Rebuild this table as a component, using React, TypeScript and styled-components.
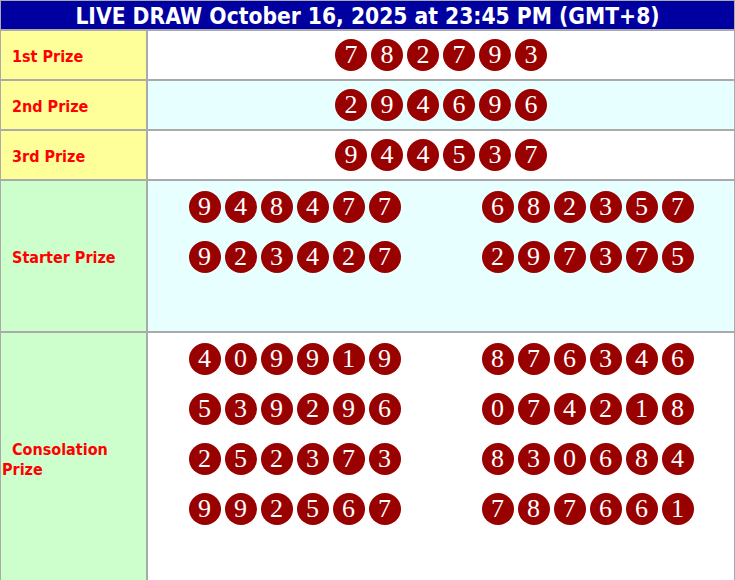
import React from 'react';
import styled, { createGlobalStyle } from 'styled-components';

const GlobalStyle = createGlobalStyle`
  body {
    margin: 0;
    background: #ffffff;
    font-family: "DejaVu Sans", Verdana, sans-serif;
  }
`;

const COLORS = {
  border: '#aaaaaa',
  header: '#0000a0',
  yellow: '#ffff99',
  green: '#ccffcc',
  cyan: '#e8ffff',
  white: '#ffffff',
  label: '#ff0000',
  ball: '#990000',
};

const Board = styled.div`
  width: 735px;
  box-sizing: border-box;
  display: grid;
  grid-template-columns: 145px 1fr;
  gap: 2px;
  padding: 1px 1px 0 1px;
  background: ${COLORS.border};
`;

const Header = styled.div`
  grid-column: 1 / span 2;
  height: 28px;
  box-sizing: border-box;
  padding-top: 2px;
  display: flex;
  align-items: center;
  justify-content: center;
  background: ${COLORS.header};
  color: #ffffff;
  font-family: "DejaVu Sans Condensed", "DejaVu Sans", sans-serif;
  font-stretch: semi-condensed;
  font-weight: bold;
  font-size: 22.6px;
  white-space: nowrap;
`;

const Label = styled.div<{ $bg: string; $h: number }>`
  min-height: ${(p) => p.$h}px;
  box-sizing: border-box;
  display: flex;
  align-items: center;
  padding: 3px 1px 0 1px;
  background: ${(p) => p.$bg};
  color: ${COLORS.label};
  font-family: "DejaVu Sans Condensed", "DejaVu Sans", sans-serif;
  font-stretch: semi-condensed;
  font-weight: bold;
  font-size: 16px;
  line-height: 20px;
`;

const Single = styled.div<{ $bg: string }>`
  display: flex;
  align-items: center;
  justify-content: center;
  background: ${(p) => p.$bg};
`;

const Split = styled.div<{ $bg: string }>`
  display: grid;
  grid-template-columns: 1fr 1fr;
  align-content: start;
  padding-top: 10px;
  row-gap: 18px;
  background: ${(p) => p.$bg};
`;

const Group = styled.div`
  display: flex;
  justify-content: center;
  gap: 4px;
`;

const Ball = styled.span`
  width: 32px;
  height: 32px;
  border-radius: 50%;
  background: ${COLORS.ball};
  color: #ffffff;
  display: inline-flex;
  align-items: center;
  justify-content: center;
  font-family: "Liberation Serif", "Times New Roman", serif;
  font-size: 26px;
  line-height: 1;
`;

const Number = ({ value }: { value: string }) => (
  <Group>
    {value.split('').map((d, i) => (
      <Ball key={i}>{d}</Ball>
    ))}
  </Group>
);

const starter = ['948477', '682357', '923427', '297375'];
const consolation = [
  '409919', '876346',
  '539296', '074218',
  '252373', '830684',
  '992567', '787661',
];

const SP = '\u00a0\u00a0';

export default function App() {
  return (
    <>
      <GlobalStyle />
      <Board>
        <Header>LIVE DRAW October 16, 2025 at 23:45 PM (GMT+8)</Header>

        <Label $bg={COLORS.yellow} $h={48}>{SP}1st Prize</Label>
        <Single $bg={COLORS.white}><Number value="782793" /></Single>

        <Label $bg={COLORS.yellow} $h={48}>{SP}2nd Prize</Label>
        <Single $bg={COLORS.cyan}><Number value="294696" /></Single>

        <Label $bg={COLORS.yellow} $h={48}>{SP}3rd Prize</Label>
        <Single $bg={COLORS.white}><Number value="944537" /></Single>

        <Label $bg={COLORS.green} $h={150}>{SP}Starter Prize</Label>
        <Split $bg={COLORS.cyan}>
          {starter.map((n) => <Number key={n} value={n} />)}
        </Split>

        <Label $bg={COLORS.green} $h={250}>{SP}Consolation Prize</Label>
        <Split $bg={COLORS.white}>
          {consolation.map((n) => <Number key={n} value={n} />)}
        </Split>
      </Board>
    </>
  );
}
